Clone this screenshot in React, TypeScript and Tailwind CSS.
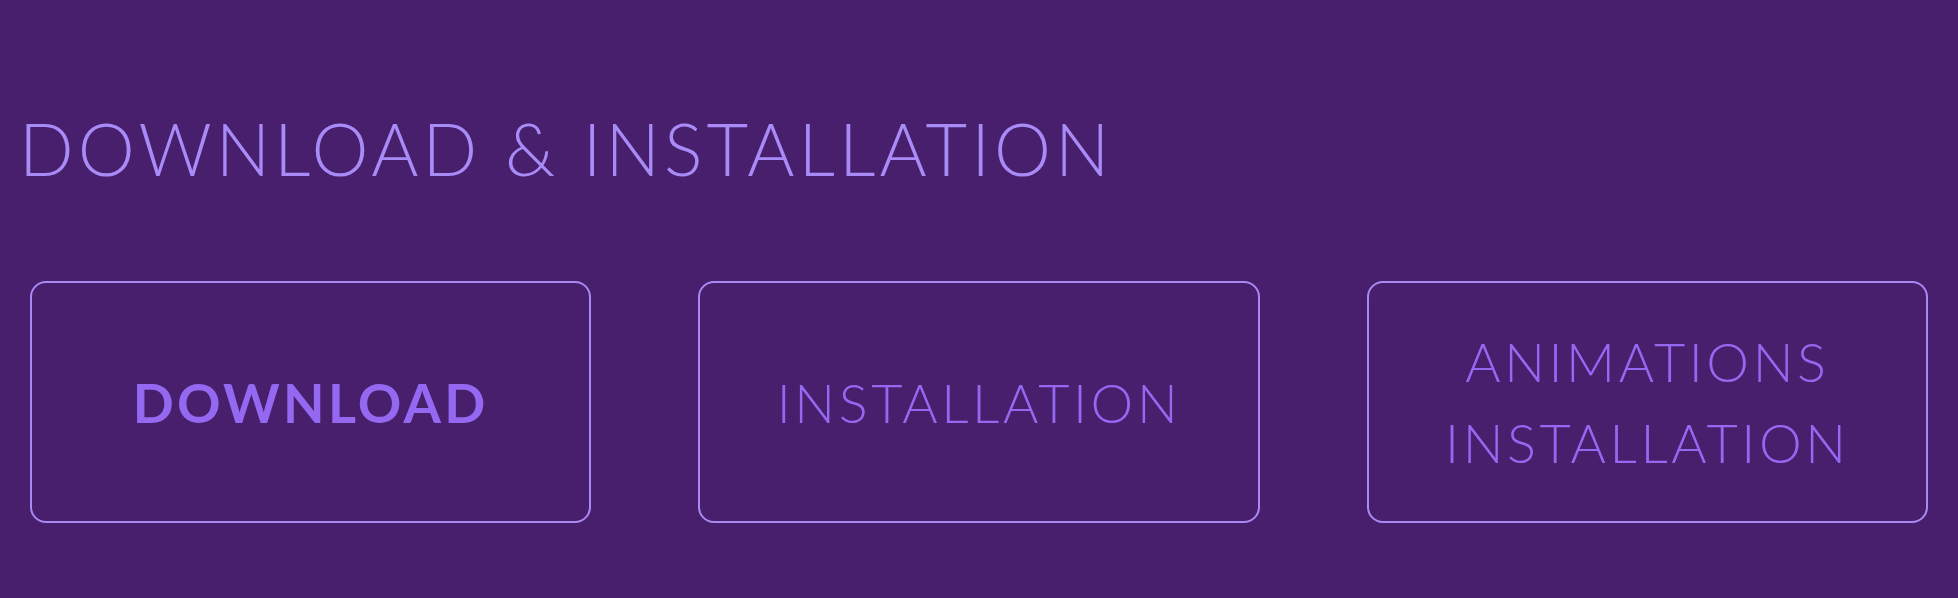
import React from 'react';

type Option = {
  label: string[];
  bold?: boolean;
};

const options: Option[] = [
  { label: ['DOWNLOAD'], bold: true },
  { label: ['INSTALLATION'] },
  { label: ['ANIMATIONS', 'INSTALLATION'] },
];

const OptionCard: React.FC<{ option: Option }> = ({ option }) => (
  <a
    href="#"
    className="flex h-[242px] flex-col items-center justify-center rounded-2xl border-2 border-[#a98af2] text-center text-[#9468f0]"
  >
    {option.label.map((line) => (
      <span
        key={line}
        className={
          option.bold
            ? 'text-[54px] font-bold leading-[1.5] tracking-[0.06em]'
            : 'text-[54px] font-light leading-[1.5] tracking-[0.066em]'
        }
      >
        {line}
      </span>
    ))}
  </a>
);

export default function App() {
  return (
    <div className="min-h-[598px] w-full bg-[#471f6d] px-[30px] pt-[94px] font-['Lato','Liberation_Sans',sans-serif]">
      {/* Section title */}
      <h1 className="-ml-[11px] text-[72px] font-light leading-[1.5] tracking-[0.056em] text-[#a98bf7]">
        DOWNLOAD &amp; INSTALLATION
      </h1>

      {/* Option cards */}
      <div className="mt-[79px] grid grid-cols-3 gap-[107px]">
        {options.map((option) => (
          <OptionCard key={option.label.join(' ')} option={option} />
        ))}
      </div>
    </div>
  );
}
